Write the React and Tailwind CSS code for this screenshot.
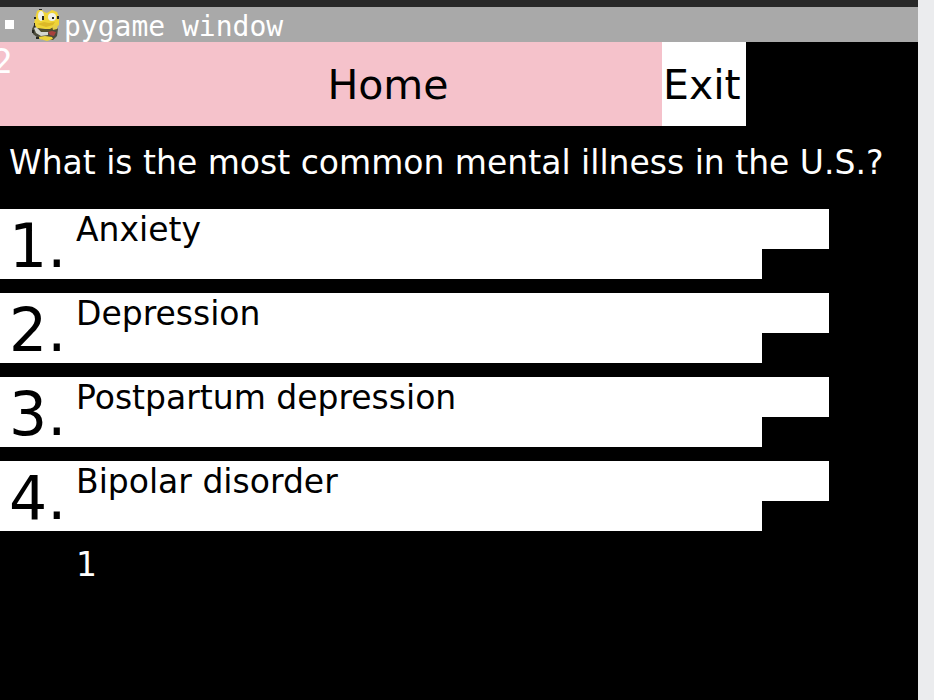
const options = ['Anxiety', 'Depression', 'Postpartum depression', 'Bipolar disorder'];

function SnakeIcon() {
  return (
    <svg viewBox="0 0 28 33" className="h-[33px] w-[28px] shrink-0" aria-hidden="true">
      <path d="M2 17 L0 21 L1 26 L6 30 L13 32 L21 32 L25 28 L26 21 L20 15 Z" fill="#4a4a3c" />
      <path d="M2 20 L5 19 L9 24 L16 24 L16 27 L9 28 L4 25 Z" fill="#d3d6cf" />
      <path d="M6 29 L13 28 L20 29 L21 31 L15 33 L8 31 Z" fill="#ecd23a" />
      <path d="M5 3 L9 1 L12 4 L15 5 L20 2 L25 4 L27 9 L27 17 L22 21 L13 21 L5 20 L2 16 L3 11 Z" fill="#efd438" />
      <path d="M5 20 L12 22 L18 21 L23 18 L25 20 L18 23 L10 24 Z" fill="#55502a" />
      <path d="M16 24 L20 23 L24 24 L22 28 L18 27 Z" fill="#a8403c" />
      <path d="M20 18 L26 16 L25 21 L21 22 Z" fill="#e5ce48" />
      <ellipse cx="9" cy="8" rx="3" ry="5" fill="#eef0ea" />
      <ellipse cx="20" cy="9" rx="4" ry="4" fill="#eef0ea" />
      <path d="M10 8h2v4h-2zM20 9h2v2h-2zM7 1h3v1H7zM25 8h2v3h-2zM2 15h1v4H2zM0 22h2v3H0zM4 29h3v2H4zM2 9h2v2H2z" fill="#262621" />
      <path d="M5 16 L12 14 L17 15 L23 14 L21 17 L14 19 Z" fill="#dcb928" />
    </svg>
  );
}

function Option({ number, label }) {
  return (
    <li>
      <button type="button" className="flex w-full items-start text-left">
        <span className="flex h-[70px] w-[83%] items-start bg-white pl-[9px]">
          <span className="w-[67px] shrink-0 text-[60px] leading-[74px]">{number}.</span>
          <span className="text-[33px] leading-[42px]">{label}</span>
        </span>
        <span className="h-10 w-[7.3%] bg-white" />
      </button>
    </li>
  );
}

export default function App() {
  return (
    <div className="flex min-h-screen bg-[#ebecee] font-['DejaVu_Sans',sans-serif] text-black">
      <div className="flex min-w-0 flex-1 flex-col bg-black">
        <div className="h-[7px] bg-[#282828]" />
        <header className="flex h-[35px] items-center bg-[#a9a9a9] pl-[5px]">
          <span className="mr-[18px] size-[9px] bg-white" />
          <SnakeIcon />
          <h1 className="pt-1 pl-1 font-['DejaVu_Sans_Mono',monospace] text-[28px] leading-8 whitespace-pre text-white">pygame window</h1>
        </header>
        <nav className="relative flex h-[84px] overflow-hidden">
          <button type="button" className="w-[72.1%] bg-[#f5c2cb] pl-[114px] text-[41px] leading-[86px]">Home</button>
          <button type="button" className="w-[84px] bg-white pr-1 text-[41px] leading-[86px]">Exit</button>
          <span className="absolute top-0 -left-2 text-[33px] leading-10 text-white">2</span>
        </nav>
        <main>
          <h2 className="h-[83px] pt-4 pl-[9px] text-[33px] leading-[42px] whitespace-nowrap text-white">
            What is the most common mental illness in the U.S.?
          </h2>
          <ol className="flex flex-col gap-[14px]">
            {options.map((label, i) => (
              <Option key={label} number={i + 1} label={label} />
            ))}
          </ol>
          <p className="pt-[13px] pl-[76px] text-[33px] leading-[42px] text-white">1</p>
        </main>
      </div>
      <div className="w-4 shrink-0" />
    </div>
  );
}
